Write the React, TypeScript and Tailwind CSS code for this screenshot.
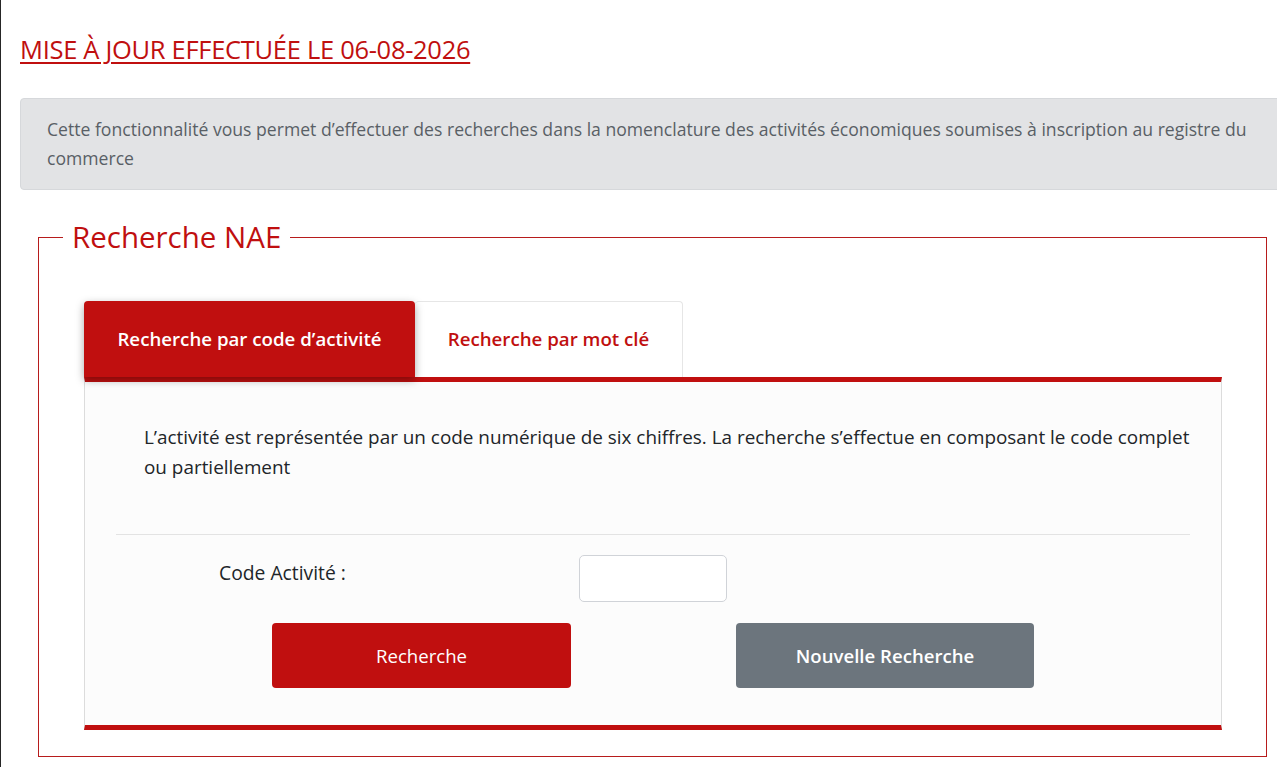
import React from "react";

export default function App() {
  return (
    <div className="min-h-screen w-full overflow-hidden bg-white border-l border-[#262626] font-['Open_Sans',sans-serif]">
      <div className="pl-[19px] pt-[31px]">
        <h1 className="text-[25.5px] leading-[36px] font-medium text-[#c00f0f] underline decoration-[2px] underline-offset-[3px] tracking-[-0.3px]">
          MISE À JOUR EFFECTUÉE LE 06-08-2026
        </h1>
      </div>

      <div className="ml-[19px] mr-[-20px] mt-[31px] rounded-[4px] border border-[#d6d8db] bg-[#e2e3e5] pl-[26px] pr-[20px] pt-[16px] pb-[16px] text-[17.6px] leading-[29px] text-[#595f66]">
        Cette fonctionnalité vous permet d’effectuer des recherches dans la nomenclature des activités économiques soumises à inscription au registre du commerce
      </div>

      <fieldset className="ml-[37px] mr-[10px] mt-[27px] border border-[#b71c1c] px-[24px] pt-0 pb-[26px]">
        <legend className="px-[9px] text-[29.5px] leading-[40px] text-[#c00f0f]">
          Recherche NAE
        </legend>
        <div className="pl-[21px] pr-[20px] pt-[44px]">
          <div className="flex items-end">
            <div className="relative z-10 flex h-[76px] w-[331px] items-center justify-center rounded-t-[4px] bg-[#c00f0f] shadow-[0_3px_8px_rgba(0,0,0,0.35)] text-[18.7px] font-semibold text-white">
              Recherche par code d’activité
            </div>
            <div className="flex h-[76px] w-[268px] items-center justify-center rounded-t-[4px] border-t border-r border-[#e6e6e6] bg-white text-[18.7px] font-semibold text-[#c00f0f]">
              Recherche par mot clé
            </div>
          </div>
          <div className="border-x border-[#dcdcdc] border-t-[5px] border-t-[#c00f0f] border-b-[5px] border-b-[#c00f0f] bg-[#fcfcfc]">
            <p className="pl-[59px] pr-[30px] pt-[40px] text-[18.9px] leading-[30px] text-[#212529]">
              L’activité est représentée par un code numérique de six chiffres. La recherche s’effectue en composant le code complet ou partiellement
            </p>
            <div className="mx-[31px] mt-[52px] border-t border-[#e3e3e3]" />
            <div className="mt-[20px] flex items-start pl-[134px]">
              <label className="w-[360px] pt-[5px] text-[19.3px] leading-[26px] text-[#212529]">
                Code Activité :
              </label>
              <input
                type="text"
                className="h-[47px] w-[148px] rounded-[5px] border border-[#d0d3d8] bg-white outline-none"
              />
            </div>
            <div className="mt-[21px] flex pl-[187px] pb-[37px]">
              <button className="h-[65px] w-[299px] rounded-[4px] bg-[#c00f0f] text-[18.6px] text-white">
                Recherche
              </button>
              <button className="ml-[165px] h-[65px] w-[298px] rounded-[4px] bg-[#6c757d] text-[18.6px] font-semibold text-white">
                Nouvelle Recherche
              </button>
            </div>
          </div>
        </div>
      </fieldset>
    </div>
  );
}
